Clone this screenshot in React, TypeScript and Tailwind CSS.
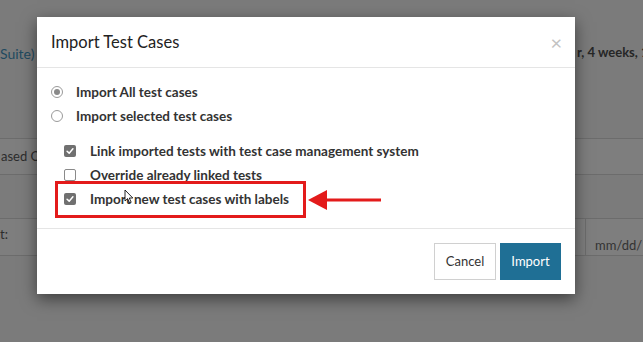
import React from "react";

function Radio({ checked }: { checked?: boolean }) {
  return (
    <span className="w-[12px] h-[12px] rounded-full border border-[#9a9a9a] bg-white flex items-center justify-center shrink-0">
      {checked && <span className="w-[6px] h-[6px] rounded-full bg-[#8a8a8a]" />}
    </span>
  );
}

function Check({ checked }: { checked?: boolean }) {
  return checked ? (
    <span className="w-[12px] h-[12px] rounded-[2px] bg-[#707070] flex items-center justify-center shrink-0">
      <svg viewBox="0 0 12 12" className="w-[10px] h-[10px]">
        <path d="M2.5 6.3 L5 8.6 L9.5 3.4" fill="none" stroke="#fff" strokeWidth="1.8" strokeLinecap="round" strokeLinejoin="round" />
      </svg>
    </span>
  ) : (
    <span className="w-[12px] h-[12px] rounded-[2px] border border-[#8a8a8a] bg-white shrink-0" />
  );
}

export default function App() {
  return (
    <div className="relative w-[643px] h-[342px] overflow-hidden bg-[#7b7b7b] font-['Lato',sans-serif]">
      {/* page behind the overlay */}
      <div className="flex flex-col">
        <div className="mt-[44px] h-[18px] flex items-center text-[14px] whitespace-nowrap">
          <span className="w-[577px] shrink-0 text-[#1f4a60]">Suite)</span>
          <span className="text-[13px] text-[#262626] font-bold">r, 4 weeks, 1</span>
        </div>
        <div className="mt-[76px] h-[37px] border-y border-[#6c6c6c] bg-[#7e7e7e] flex items-center text-[13px] text-[#2c2c2c] whitespace-nowrap">
          <span className="pl-[1px]">ased O</span>
        </div>
        <div className="mt-[43px] h-[38px] border-y border-[#6c6c6c] bg-[#7e7e7e] flex text-[13px] text-[#2c2c2c] whitespace-nowrap">
          <span className="w-[585px] shrink-0 pt-[6px]">t:</span>
          <span className="flex-1 border-l border-[#6c6c6c] pl-[9px] pt-[17px] text-[#333]">mm/dd/</span>
        </div>
      </div>

      {/* modal */}
      <div className="absolute left-[37px] top-[17px] w-[538px] bg-white shadow-[0_5px_15px_rgba(0,0,0,0.5)] text-[#333]">
        <div className="h-[51px] pl-[14px] pr-[13px] flex items-center justify-between border-b border-[#e5e5e5]">
          <h2 className="text-[16.5px] text-[#222]">Import Test Cases</h2>
          <span className="text-[20px] leading-none text-[#c2c2c2]">×</span>
        </div>

        <div className="pt-[12px] pb-[17px] pl-[14px] text-[13.5px] font-bold">
          <div className="h-[24px] flex items-center gap-[13px]">
            <Radio checked />
            <span>Import All test cases</span>
          </div>
          <div className="h-[24px] flex items-center gap-[13px]">
            <Radio />
            <span>Import selected test cases</span>
          </div>
          <div className="mt-[11px] pl-[13px]">
            <div className="h-[24px] flex items-center gap-[14px]">
              <Check checked />
              <span>Link imported tests with test case management system</span>
            </div>
            <div className="h-[24px] flex items-center gap-[14px]">
              <Check />
              <span>Override already linked tests</span>
            </div>
            <div className="relative h-[24px] flex items-center gap-[14px]">
              <Check checked />
              <span>Import new test cases with labels</span>
              <div className="absolute -left-[9px] -top-[6px] w-[251px] h-[37px] border-[3px] border-[#e31b1b]" />
              <svg className="absolute left-[244px] top-[2px]" width="74" height="22" viewBox="0 0 74 22">
                <path d="M0 11 L19 1 L19 21 Z" fill="#e31b1b" />
                <rect x="17" y="9.5" width="56" height="3" fill="#e31b1b" />
              </svg>
              <svg className="absolute left-[60px] top-[2px]" width="10" height="15" viewBox="0 0 10 15">
                <path d="M1 1 L1 12 L3.6 9.6 L5.6 14 L7.2 13.3 L5.3 9 L8.8 9 Z" fill="#fff" stroke="#111" strokeWidth="0.9" strokeLinejoin="round" />
              </svg>
            </div>
          </div>
        </div>

        <div className="border-t border-[#e5e5e5] p-[14px] flex justify-end gap-[4px] text-[13px]">
          <button className="w-[62px] h-[37px] border border-[#d0d0d0] bg-white text-[#333]">Cancel</button>
          <button className="w-[61px] h-[37px] bg-[#1f6f95] text-white">Import</button>
        </div>
      </div>
    </div>
  );
}
